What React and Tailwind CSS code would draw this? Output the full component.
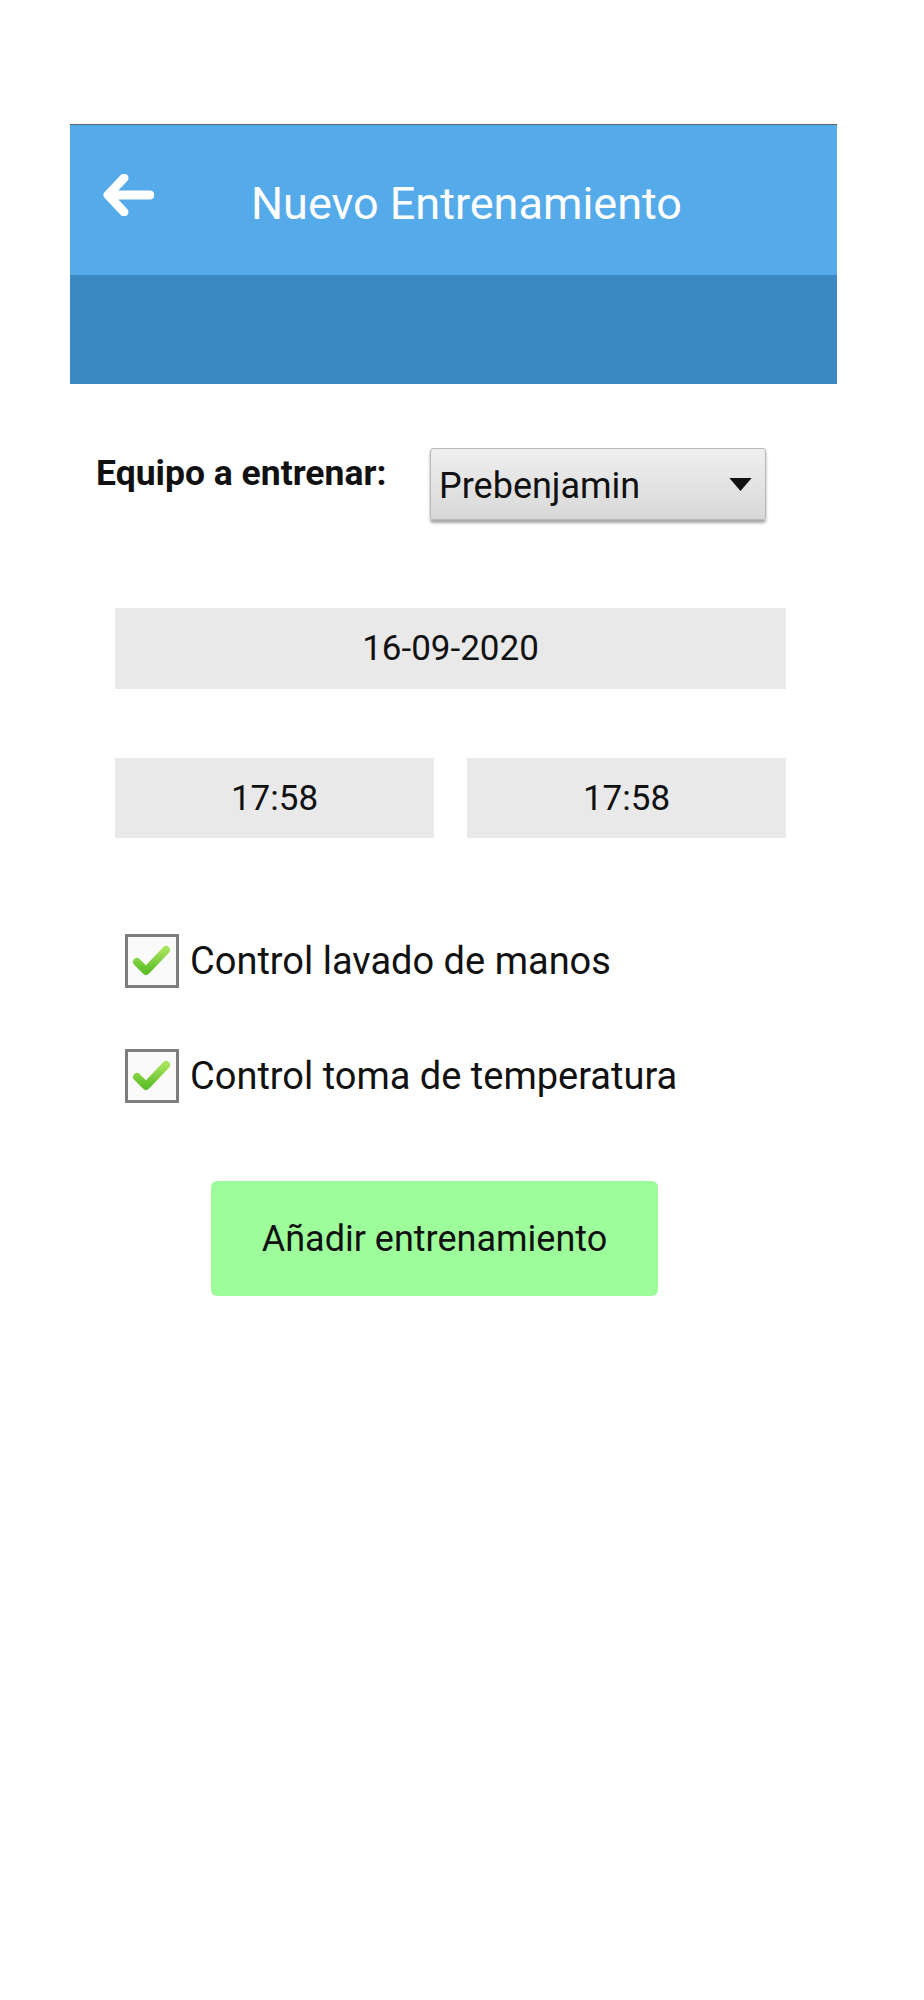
import React from "react";

const CheckBox = ({ label }) => {
  return (
    <div className="flex items-center">
      <div className="w-[54px] h-[54px] border-[3px] border-[#7d7d7d] bg-[#fafafa] flex items-center justify-center shrink-0">
        <svg width="40" height="34" viewBox="0 0 40 34">
          <defs>
            <linearGradient id="chk" x1="0" y1="0" x2="0" y2="1">
              <stop offset="0" stopColor="#a6e25a" />
              <stop offset="1" stopColor="#5fbf2a" />
            </linearGradient>
          </defs>
          <path
            d="M5 18 L14 27 L34 6"
            fill="none"
            stroke="url(#chk)"
            strokeWidth="8"
            strokeLinecap="round"
            strokeLinejoin="round"
          />
        </svg>
      </div>
      <span className="ml-[11px] text-[38px] leading-none text-[#111]">{label}</span>
    </div>
  );
};

const App = () => {
  return (
    <div className="bg-white min-h-[2000px] pt-[124px] font-['Roboto','Noto_Sans',sans-serif]">
      {/* Header */}
      <div className="ml-[70px] w-[767px] border-t border-[#5d6670]">
        <div className="h-[150px] bg-[#55abea] flex items-center pl-[32px]">
          <svg width="52" height="42" viewBox="0 0 52 42" className="mb-[10px]">
            <path
              d="M22 4 L6 21 L22 38 M6 21 L48 21"
              fill="none"
              stroke="white"
              strokeWidth="9"
              strokeLinecap="round"
              strokeLinejoin="round"
            />
          </svg>
          <h1 className="ml-[97px] mt-[6px] text-[45px] leading-none text-white">
            Nuevo Entrenamiento
          </h1>
        </div>
        <div className="h-[109px] bg-[#3c88c2]" />
      </div>

      {/* Equipo */}
      <div className="flex items-start mt-[64px] ml-[96px]">
        <p className="w-[334px] mt-[8px] text-[35.5px] leading-none font-bold text-[#111]">
          Equipo a entrenar:
        </p>
        <div className="w-[336px] h-[72px] flex items-center justify-between pl-[8px] pr-[13px] rounded-[3px] border border-[#b9b9b9] bg-gradient-to-b from-[#efefef] to-[#d8d8d8] shadow-[0_3px_3px_rgba(0,0,0,0.35)]">
          <span className="text-[36px] leading-none text-[#111] mt-[4px]">Prebenjamin</span>
          <svg width="23" height="13" viewBox="0 0 24 14">
            <path d="M0 0 L24 0 L12 14 Z" fill="#111" />
          </svg>
        </div>
      </div>

      {/* Fecha */}
      <div className="ml-[115px] w-[671px] h-[81px] mt-[88px] bg-[#e9e9e9] flex items-center justify-center">
        <span className="text-[35px] leading-none text-[#111]">16-09-2020</span>
      </div>

      {/* Horas */}
      <div className="ml-[115px] w-[671px] mt-[69px] flex gap-[33px]">
        <div className="flex-1 h-[80px] bg-[#e9e9e9] flex items-center justify-center">
          <span className="text-[35px] leading-none text-[#111]">17:58</span>
        </div>
        <div className="flex-1 h-[80px] bg-[#e9e9e9] flex items-center justify-center">
          <span className="text-[35px] leading-none text-[#111]">17:58</span>
        </div>
      </div>

      {/* Controles */}
      <div className="ml-[125px] mt-[96px] flex flex-col gap-[61px]">
        <CheckBox label="Control lavado de manos" />
        <CheckBox label="Control toma de temperatura" />
      </div>

      {/* Boton */}
      <button className="ml-[211px] mt-[78px] w-[447px] h-[115px] rounded-[6px] bg-[#9dfd9b] flex items-center justify-center">
        <span className="text-[36px] leading-none text-[#111]">Añadir entrenamiento</span>
      </button>
    </div>
  );
};

export default App;
